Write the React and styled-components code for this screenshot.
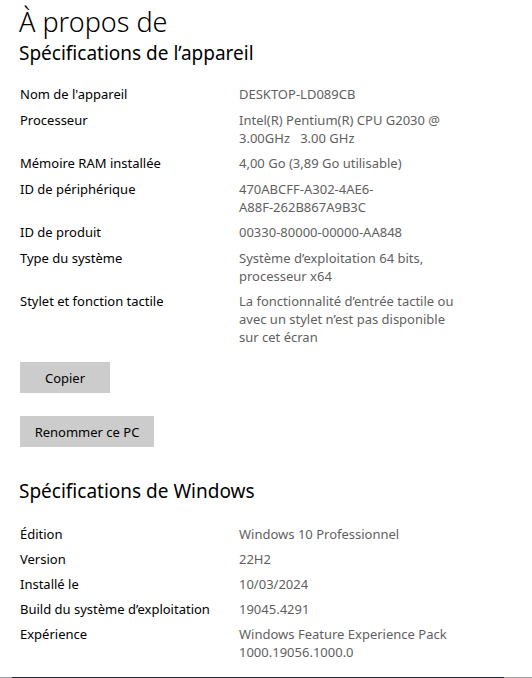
import React from "react";
import styled, { createGlobalStyle } from "styled-components";

const Global = createGlobalStyle`
  html, body { margin: 0; padding: 0; background: #ffffff; }
  body { font-family: "Noto Sans", "Open Sans", "Liberation Sans", sans-serif; color: #000; }
`;

const Page = styled.div`
  width: 532px;
  height: 678px;
  box-sizing: border-box;
  padding: 4px 0 0 20px;
  overflow: hidden;
  position: relative;
`;

const Title = styled.h1`
  margin: 0 0 0 -1px;
  font-size: 27px;
  font-weight: 300;
  line-height: 36px;
  color: #000;
`;

const Heading = styled.h2`
  margin: ${(p) => p.$mt || 0}px 0 0 -1px;
  font-size: 19px;
  font-weight: 400;
  line-height: 26px;
  color: #000;
`;

const Table = styled.div`
  display: flex;
  flex-direction: column;
  gap: ${(p) => p.$gap}px;
  margin-top: ${(p) => p.$mt}px;
`;

const Row = styled.div`
  display: grid;
  grid-template-columns: 219px 240px;
  font-size: 13px;
  line-height: 18px;
`;

const Label = styled.div`
  color: #000;
`;

const Value = styled.div`
  color: #5f5f5f;
`;

const Line = styled.div`
  white-space: pre;
`;

const Button = styled.button`
  display: block;
  height: 31px;
  width: ${(p) => p.$w}px;
  margin-top: ${(p) => p.$mt}px;
  border: none;
  background: #cccccc;
  font-family: inherit;
  font-size: 13px;
  color: #000;
  padding: 0;
`;

const BottomBar = styled.div`
  position: absolute;
  left: 0;
  right: 0;
  bottom: 0;
  height: 1px;
  background: linear-gradient(to right, #9aa0a4 0 12px, #1e2a33 12px 504px, #9aa0a4 504px);
`;

const device = [
  ["Nom de l'appareil", "DESKTOP-LD089CB"],
  ["Processeur", "Intel(R) Pentium(R) CPU G2030 @\n3.00GHz   3.00 GHz"],
  ["Mémoire RAM installée", "4,00 Go (3,89 Go utilisable)"],
  ["ID de périphérique", "470ABCFF-A302-4AE6-\nA88F-262B867A9B3C"],
  ["ID de produit", "00330-80000-00000-AA848"],
  ["Type du système", "Système d’exploitation 64 bits,\nprocesseur x64"],
  ["Stylet et fonction tactile", "La fonctionnalité d’entrée tactile ou\navec un stylet n’est pas disponible\nsur cet écran"],
];

const windows = [
  ["Édition", "Windows 10 Professionnel"],
  ["Version", "22H2"],
  ["Installé le", "10/03/2024"],
  ["Build du système d’exploitation", "19045.4291"],
  ["Expérience", "Windows Feature Experience Pack\n1000.19056.1000.0"],
];

const Specs = ({ rows, mt, gap }) => (
  <Table $mt={mt} $gap={gap}>
    {rows.map(([k, v]) => (
      <Row key={k}>
        <Label>{k}</Label>
        <Value>
          {v.split("\n").map((l, i) => (
            <Line key={i}>{l}</Line>
          ))}
        </Value>
      </Row>
    ))}
  </Table>
);

export default function App() {
  return (
    <Page>
      <Global />
      <Title>À propos de</Title>
      <Heading>Spécifications de l’appareil</Heading>
      <Specs rows={device} mt={19} gap={7.5} />
      <Button $w={90} $mt={16}>Copier</Button>
      <Button $w={134} $mt={23}>Renommer ce PC</Button>
      <Heading $mt={31}>Spécifications de Windows</Heading>
      <Specs rows={windows} mt={21} gap={7} />
      <BottomBar />
    </Page>
  );
}
